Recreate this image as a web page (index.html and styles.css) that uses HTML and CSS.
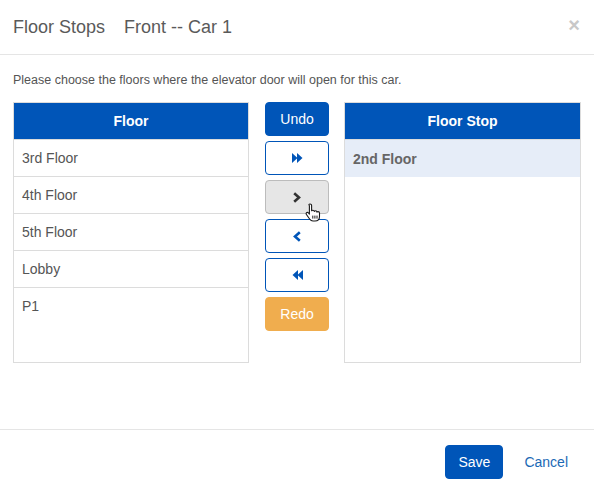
FILE: index.html
```html
<!DOCTYPE html>
<html>
<head>
<meta charset="utf-8">
<link rel="stylesheet" href="styles.css">
</head>
<body>
<div class="modal">
  <div class="modal-header">
    <h4 class="title"><span>Floor Stops</span><span class="sub">Front -- Car 1</span></h4>
    <span class="close">×</span>
  </div>
  <div class="modal-body">
    <p class="intro">Please choose the floors where the elevator door will open for this car.</p>
    <div class="picker">
      <div class="panel">
        <div class="panel-head">Floor</div>
        <div class="row">3rd Floor</div>
        <div class="row">4th Floor</div>
        <div class="row">5th Floor</div>
        <div class="row">Lobby</div>
        <div class="row last">P1</div>
      </div>
      <div class="controls">
        <button class="btn solid">Undo</button>
        <button class="btn outline"><svg width="11" height="10" viewBox="0 0 11 10"><path d="M0 0L5.5 5L0 10Z M5 0L10.5 5L5 10Z" fill="currentColor"/></svg></button>
        <button class="btn hover"><svg width="8" height="11" viewBox="0 0 8 11"><path d="M1.2 1.2L6 5.5L1.2 9.8" fill="none" stroke="currentColor" stroke-width="2.6"/></svg></button>
        <button class="btn outline"><svg width="8" height="11" viewBox="0 0 8 11"><path d="M6.8 1.2L2 5.5L6.8 9.8" fill="none" stroke="currentColor" stroke-width="2.6"/></svg></button>
        <button class="btn outline"><svg width="11" height="10" viewBox="0 0 11 10"><path d="M11 0L5.5 5L11 10Z M6 0L0.5 5L6 10Z" fill="currentColor"/></svg></button>
        <button class="btn warn">Redo</button>
        <svg class="cursor" width="17" height="19" viewBox="0 0 17 19"><path d="M5 1c1 0 1.6.6 1.6 1.6v5.2c.3-.4.7-.6 1.2-.6.8 0 1.4.5 1.5 1.2.3-.4.7-.6 1.2-.6.8 0 1.4.6 1.4 1.3.3-.3.7-.5 1.1-.5.8 0 1.5.6 1.5 1.5v3.3c0 2.8-1.9 4.6-4.5 4.6H8c-1.4 0-2.4-.6-3.2-1.7L1.4 11.5c-.5-.7-.3-1.5.4-1.9.6-.3 1.3-.1 1.7.4l.9 1.1V2.6C3.4 1.6 4 1 5 1z" fill="#fff" stroke="#1a1a1a" stroke-width="1.1" stroke-linejoin="round"/><path d="M7.8 12.6v3M9.9 12.6v3M12 12.6v3" stroke="#1a1a1a" stroke-width="1"/></svg>
      </div>
      <div class="panel">
        <div class="panel-head">Floor Stop</div>
        <div class="row selected">2nd Floor</div>
      </div>
    </div>
  </div>
  <div class="modal-footer">
    <button class="btn solid save">Save</button>
    <a class="cancel">Cancel</a>
  </div>
</div>
</body>
</html>
```
FILE: styles.css
```css
* { box-sizing: border-box; }
html, body { margin: 0; padding: 0; background: #fff; }
body {
  font-family: "Liberation Sans", Arial, sans-serif;
  color: #555;
  width: 594px;
  height: 491px;
  overflow: hidden;
}
.modal { width: 594px; }
.modal-header {
  height: 55px;
  border-bottom: 1px solid #e5e5e5;
  display: flex;
  align-items: center;
  justify-content: space-between;
  padding: 0 14px 1px 13px;
}
.title {
  margin: 0;
  font-size: 18px;
  font-weight: normal;
  color: #5a5a5a;
  line-height: 20px;
}
.title .sub { margin-left: 19px; }
.close {
  font-size: 20px;
  font-weight: bold;
  color: #c8c8c8;
  line-height: 20px;
  margin-top: -4px;
}
.modal-body {
  height: 375px;
  padding: 15px 13px 0 13px;
  border-bottom: 1px solid #e5e5e5;
}
.intro {
  margin: 0 0 12px 0;
  font-size: 12.5px;
  line-height: 20px;
  color: #555;
}
.picker {
  display: grid;
  grid-template-columns: 236px 64px 236px;
  column-gap: 16px;
  align-items: start;
}
.picker .panel:last-child { margin-left: -1px; }
.panel {
  height: 261px;
  border: 1px solid #dcdcdc;
  overflow: hidden;
}
.panel-head {
  height: 37px;
  background: #0055b8;
  color: #fff;
  font-weight: bold;
  font-size: 14px;
  display: flex;
  align-items: center;
  justify-content: center;
  border-bottom: 1px solid #dcdcdc;
}
.row {
  height: 37px;
  border-bottom: 1px solid #dcdcdc;
  display: flex;
  align-items: center;
  padding: 0 8px;
  font-size: 14px;
  color: #555;
}
.row.last { border-bottom: none; align-items: flex-start; padding-top: 10px; }
.row.selected {
  background: #e6edf8;
  font-weight: bold;
  color: #666;
  border-bottom: none;
}
.controls {
  position: relative;
  display: flex;
  flex-direction: column;
  gap: 5px;
}
.btn {
  height: 34px;
  border-radius: 4px;
  font-family: "Liberation Sans", Arial, sans-serif;
  font-size: 14px;
  border: 1px solid transparent;
  padding: 0;
  display: flex;
  align-items: center;
  justify-content: center;
  cursor: pointer;
}
.btn.solid { background: #0055b8; border-color: #0055b8; color: #fff; }
.btn.outline { background: #fff; border-color: #0055b8; color: #0055b8; }
.btn.hover { background: #e6e6e6; border-color: #bcbcbc; color: #333; }
.btn.warn { background: #f0ad4e; border-color: #f0ad4e; color: #fff; }
.cursor {
  position: absolute;
  left: 40px;
  top: 101px;
}
.modal-footer {
  display: flex;
  justify-content: flex-end;
  align-items: center;
  padding: 15px 26px 0 0;
  gap: 21px;
}
.save { width: 58px; font-size: 14px; }
.cancel { color: #1b69b5; font-size: 14px; }
```
